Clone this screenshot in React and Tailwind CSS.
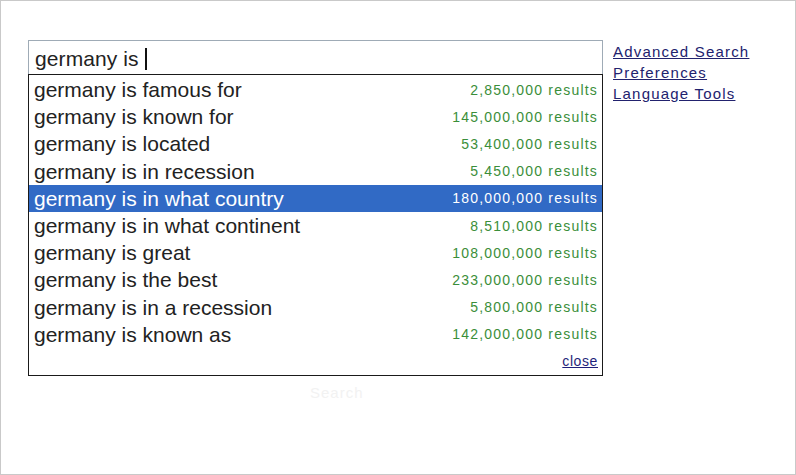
import React from 'react';

const suggestions = [
  { text: 'germany is famous for', count: '2,850,000 results' },
  { text: 'germany is known for', count: '145,000,000 results' },
  { text: 'germany is located', count: '53,400,000 results' },
  { text: 'germany is in recession', count: '5,450,000 results' },
  { text: 'germany is in what country', count: '180,000,000 results', active: true },
  { text: 'germany is in what continent', count: '8,510,000 results' },
  { text: 'germany is great', count: '108,000,000 results' },
  { text: 'germany is the best', count: '233,000,000 results' },
  { text: 'germany is in a recession', count: '5,800,000 results' },
  { text: 'germany is known as', count: '142,000,000 results' },
];

const links = ['Advanced Search', 'Preferences', 'Language Tools'];

const App = () => {
  return (
    <div className="w-[796px] h-[475px] border border-[#c9c9c9] bg-white font-['Liberation_Sans',Arial,sans-serif] overflow-hidden">
      <div className="flex pt-[39px] pl-[27px]">
        {/* Search box + suggestion dropdown */}
        <div className="w-[575px]">
          <div className="h-[34px] border border-b-0 border-[#9fabb6] flex items-center pt-[3px] pl-[6px] text-[21px] text-[#222]">
            <span className="tracking-[0.1px]">germany is</span>
            <span className="ml-[6px] w-[2px] h-[22px] bg-[#111]" />
          </div>
          <div className="border border-[#1a1a1a] pt-[1px]">
            {suggestions.map((s, i) => (
              <div
                key={i}
                className={`h-[27.2px] flex items-center justify-between pl-[5px] pr-[4px] ${s.active ? 'bg-[#316ac5] text-white' : 'text-[#222]'}`}
              >
                <span className="text-[21px] leading-none">{s.text}</span>
                <span className={`text-[14px] tracking-[1.2px] leading-none ${s.active ? 'text-white' : 'text-[#3a8e3a]'}`}>
                  {s.count}
                </span>
              </div>
            ))}
            <div className="h-[27px] flex items-center justify-end pr-[4px]">
              <span className="text-[14px] tracking-[0.6px] text-[#1f1f7a] underline">close</span>
            </div>
          </div>
          <div className="text-[15px] text-[#f2f2f2] mt-[6px] pl-[282px] tracking-[1px]">Search</div>
        </div>

        {/* Side links */}
        <div className="ml-[10px] pt-[1px] flex flex-col">
          {links.map((l) => (
            <span key={l} className="text-[15px] leading-[21px] tracking-[1.2px] text-[#22226e] underline">
              {l}
            </span>
          ))}
        </div>
      </div>
    </div>
  );
};

export default App;
